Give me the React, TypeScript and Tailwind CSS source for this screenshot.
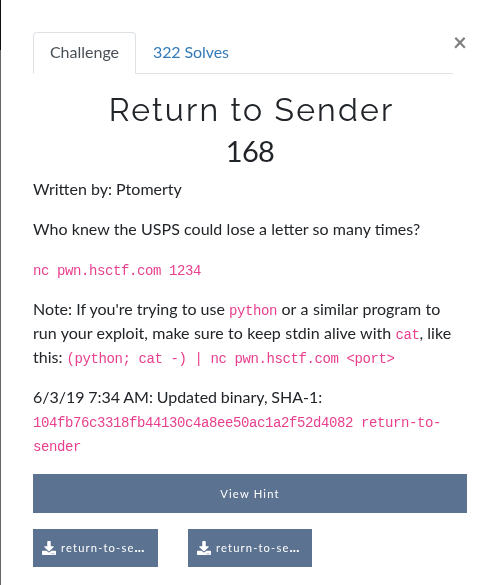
import { FaDownload } from "react-icons/fa";

const code = "font-['Liberation_Mono',monospace] text-[14px] leading-[14px] tracking-[-0.4px] text-[#e83e8c]";

function FileButton({ width }: { width: string }) {
  return (
    <button className={"flex h-[38px] items-center bg-[#5b7290] pl-[9px] text-[11.2px] tracking-[1.15px] text-white " + width}>
      <FaDownload className="mr-[5px] size-[14px] shrink-0" />
      <span className="whitespace-nowrap">return-to-se<b className="text-[13px] leading-none font-black tracking-[0.3px]">...</b></span>
    </button>
  );
}

export default function App() {
  return (
    <main className="flex h-[585px] w-[499px] overflow-hidden font-[Lato,sans-serif] text-[16px] leading-[24px] text-[#212529] will-change-transform">
      <div className="w-px shrink-0 bg-[#666]"><div className="h-[50px] bg-[#0c1015]" /></div>
      <div className="w-[466px] shrink-0 pt-[32px] pl-[32px]">
        <div className="flex">
          <nav className="flex h-[42px] w-[420px] shrink-0 border-b border-[#dee2e6]">
            <div className="h-[42px] w-[103px] rounded-t border border-b-white border-[#dee2e6] pt-[7px] text-center text-[#495057]">Challenge</div>
            <a className="pt-[8px] pl-[17px] tracking-[-0.1px] text-[#337ab7]">322 Solves</a>
          </nav>
          <button className="-mt-[2px] h-[24px] text-[24px] font-bold text-black opacity-50">×</button>
        </div>
        <h1 className="mt-[16px] pl-[3px] text-center font-[Raleway,Lato,sans-serif] text-[32px] leading-[40px] tracking-[2.15px]">Return to Sender</h1>
        <h2 className="text-center text-[29px] leading-[42px] tracking-[-0.7px]">168</h2>
        <p className="mt-[5px]">Written by: Ptomerty</p>
        <p className="mt-[16px] [word-spacing:0.18px]">Who knew the USPS could lose a letter so many times?</p>
        <p className="mt-[16px] h-[24px]"><code className={code}>nc pwn.hsctf.com 1234</code></p>
        <div className="mt-[16px] whitespace-nowrap">
          <p>Note: If you're trying to use <code className={code}>python</code><span className="[word-spacing:0.4px]"> or a similar program to</span></p>
          <p><span className="[word-spacing:0.3px]">run your exploit, make sure to keep stdin alive with </span><code className={code}>cat</code>, like</p>
          <p>this: <code className={code}>{"(python; cat -) | nc pwn.hsctf.com <port>"}</code></p>
        </div>
        <p className="mt-[16px] whitespace-nowrap"><span className="[word-spacing:-0.4px]">6/3/19 7:34 AM: Updated binary, SHA-1:</span><br /><code className={code}>104fb76c3318fb44130c4a8ee50ac1a2f52d4082 return-to-<br />sender</code></p>
        <button className="mt-[17px] block h-[39px] w-full bg-[#5b7290] text-[11.2px] tracking-[1.2px] text-white">View Hint</button>
        <div className="mt-[16px] flex gap-[30px]"><FileButton width="w-[125px]" /><FileButton width="w-[124px]" /></div>
      </div>
    </main>
  );
}
